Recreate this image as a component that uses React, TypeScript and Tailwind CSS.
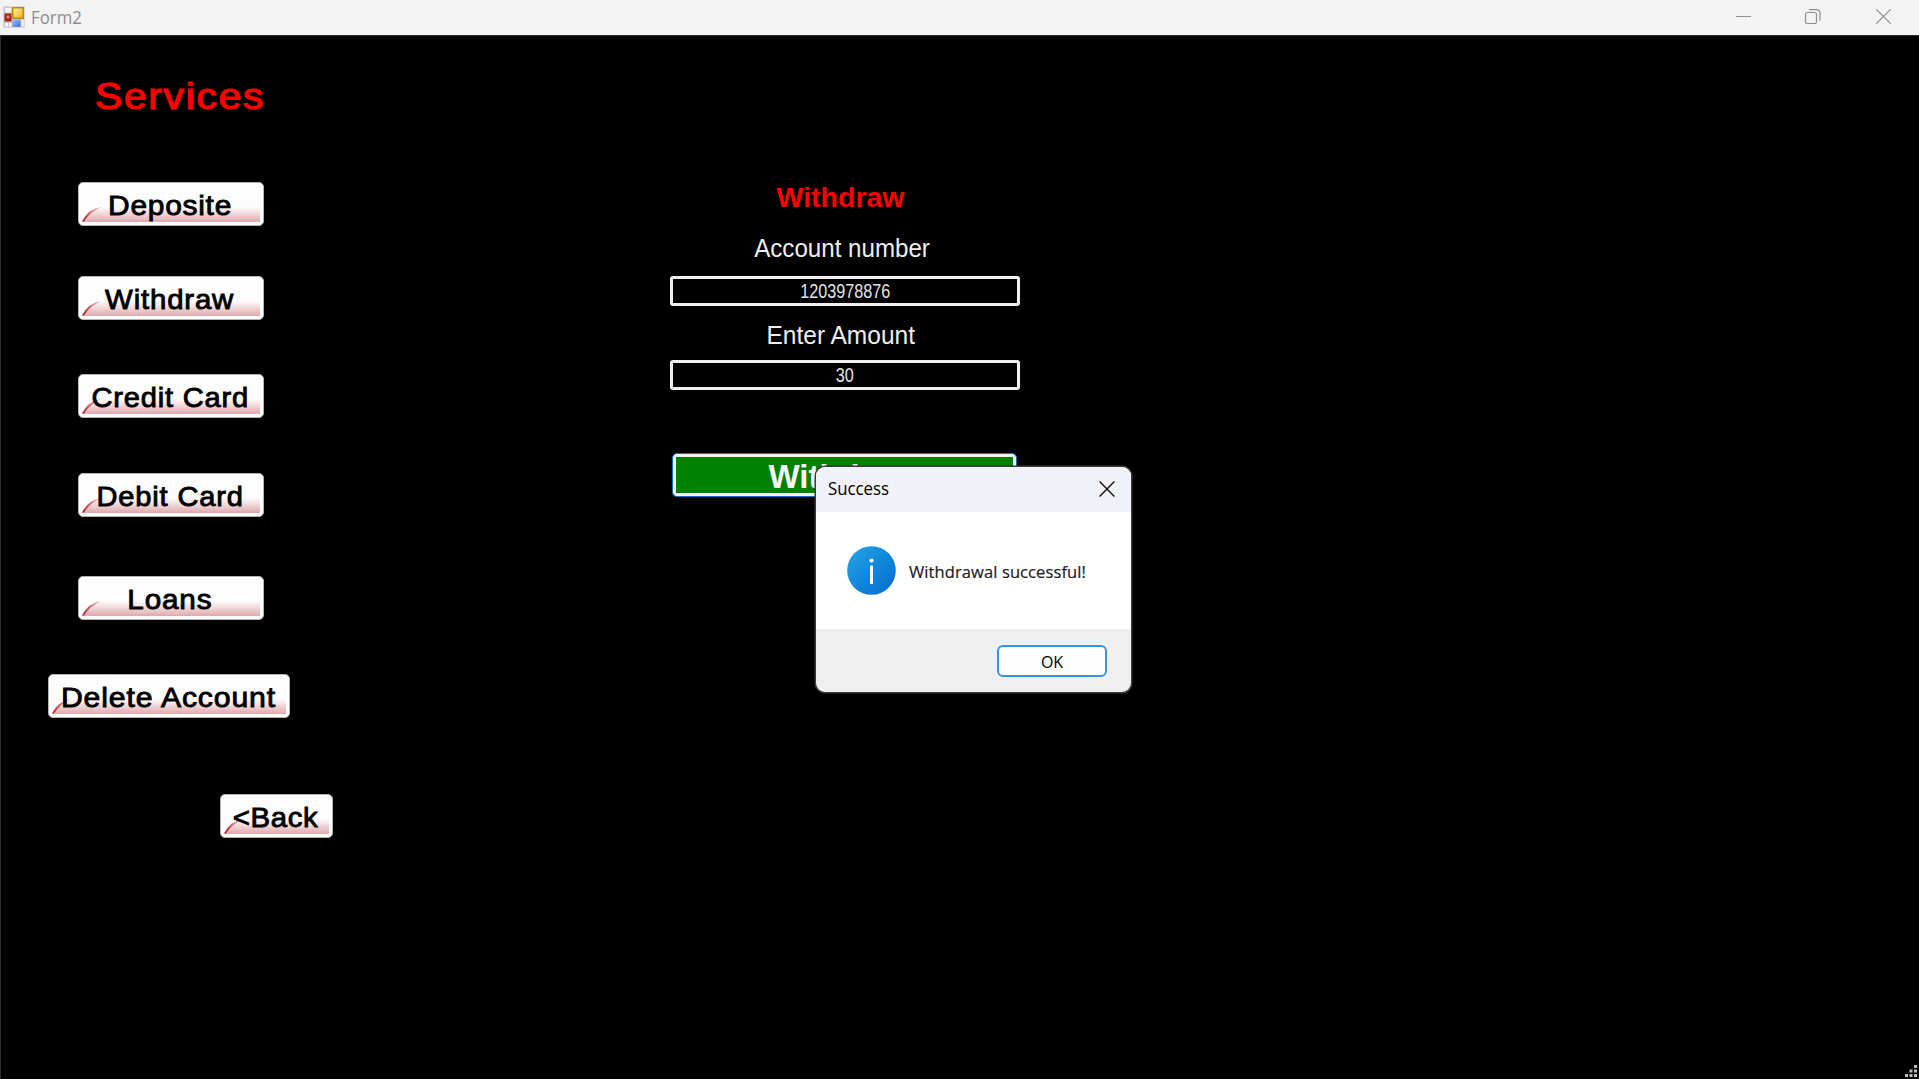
import React from "react";

type ServiceButtonProps = { label: string; box: string; text: string };

function ServiceButton({ label, box, text }: ServiceButtonProps) {
  return (
    <button
      className={`relative flex h-[44px] shrink-0 items-center justify-center rounded-[5px] border border-[#b4b4b4] bg-[#fdfdfd] ${box}`}
    >
      <span className="absolute bottom-[3px] left-[3px] right-[3px] h-[15px] bg-linear-to-b from-[#fdfdfd] to-[#dfa9ad] [clip-path:polygon(0_100%,7px_35%,18px_0,100%_0,100%_100%)]" />
      <svg className="absolute bottom-[3px] left-[3px]" width="22" height="16" viewBox="0 0 22 16">
        <defs>
          <linearGradient id="swoosh" x1="0" y1="1" x2="1" y2="0">
            <stop offset="0" stopColor="#b01c26" />
            <stop offset="1" stopColor="#e8c0c2" />
          </linearGradient>
        </defs>
        <path d="M0 15.5Q6 3 20 .8Q9 5 2 15.5Z" fill="url(#swoosh)" />
      </svg>
      <span className={`relative mr-[2px] mt-[2px] block whitespace-nowrap text-[28.5px] leading-[34px] text-black [-webkit-text-stroke:0.9px_black] ${text}`}>
        {label}
      </span>
    </button>
  );
}

function Field({ value, margin }: { value: string; margin: string }) {
  return (
    <div
      className={`flex h-[30px] w-[350px] items-center justify-center rounded-[3px] border-[3px] border-[#efefef] text-[19.5px] leading-none text-[#e4e4e4] ${margin}`}
    >
      <span className="mt-[1px] block scale-x-[0.83]">{value}</span>
    </div>
  );
}

function FormIcon() {
  return (
    <svg width="22" height="22" viewBox="0 0 22 22">
      <defs>
        <linearGradient id="gold" x1="0" y1="0" x2="1" y2="1">
          <stop offset="0" stopColor="#fff0a8" />
          <stop offset="1" stopColor="#eeb512" />
        </linearGradient>
        <linearGradient id="blue" x1="0" y1="0" x2="1" y2="1">
          <stop offset="0" stopColor="#9dbdf5" />
          <stop offset="1" stopColor="#3a6fd6" />
        </linearGradient>
      </defs>
      <rect x=".3" y=".3" width="21.4" height="21.4" fill="#c9c9c9" />
      <rect x="2" y="2" width="6" height="4.5" fill="#f4f4f4" />
      <rect x="1.5" y="7.5" width="7" height="8" fill="#a8201c" />
      <rect x="3.5" y="9.5" width="3" height="3" fill="#dd7f77" />
      <rect x="2" y="17" width="3" height="3.5" fill="#f6f6f6" />
      <rect x="6" y="17" width="2.5" height="3.5" fill="#f6f6f6" />
      <rect x="9" y="1" width="12" height="12" fill="#bd8b12" />
      <rect x="10.5" y="2.5" width="9" height="9" fill="url(#gold)" />
      <rect x="9.5" y="13.8" width="8" height="7" fill="url(#blue)" />
      <rect x="18.6" y="14" width="2" height="6.5" fill="#f6f6f6" />
    </svg>
  );
}

function TitleBar() {
  return (
    <header className="flex h-[35px] shrink-0 items-center bg-[#f3f3f3] pl-[3px]">
      <div className="mt-[-1px]">
        <FormIcon />
      </div>
      <span className="ml-[6px] origin-left scale-x-[0.96] font-['Open_Sans',sans-serif] text-[17.5px] leading-none text-[#8d8d8d]">
        Form2
      </span>
      <svg className="mt-[-2px] ml-auto mr-[28px]" width="155" height="15" viewBox="0 0 155 15" fill="none" stroke="#8f8f8f">
        <path d="M0 7.5H15" />
        <rect x="69.5" y="3.5" width="11" height="11" rx="1.8" strokeWidth="1.2" />
        <path d="M73 .6h7.2q3.8 0 3.8 3.8v7.4" strokeWidth="1.2" />
        <path d="M140.3.3l14.4 14.4M154.7.3L140.3 14.7" strokeWidth="1.2" />
      </svg>
    </header>
  );
}

function SuccessDialog() {
  return (
    <div className="absolute left-[816px] top-[467px] flex h-[225px] w-[315px] flex-col overflow-hidden rounded-[9px] bg-[#efefef] font-['Open_Sans',sans-serif] text-black shadow-[0_0_0_1.5px_#3a3a3a] [&>*]:shrink-0">
      <div className="flex h-[45px] items-center justify-between bg-[#f1f2f8] pl-[12px] pr-[16px]">
        <span className="mt-[-2px] origin-left scale-x-[0.96] text-[17.5px] leading-none">Success</span>
        <svg className="mt-[-2px]" width="16" height="16" viewBox="0 0 16 16" stroke="#111" strokeWidth="1.4">
          <path d="M.6.6l14.8 14.8M15.4.6L.6 15.4" />
        </svg>
      </div>
      <div className="flex h-[117px] items-center bg-white pl-[31px]">
        <svg width="49" height="49" viewBox="0 0 49 49">
          <defs>
            <linearGradient id="info" x1="0" y1="0" x2="1" y2="1">
              <stop offset=".1" stopColor="#1f9fe4" />
              <stop offset=".9" stopColor="#0670d2" />
            </linearGradient>
          </defs>
          <circle cx="24.5" cy="24.5" r="24.3" fill="url(#info)" />
          <circle cx="24.5" cy="14.5" r="2.1" fill="#fff" />
          <rect x="23" y="19.5" width="3" height="18.5" rx=".6" fill="#fff" />
        </svg>
        <span className="ml-[13px] mt-[3px] origin-left whitespace-nowrap text-[16.5px] leading-none tracking-[0.1px] text-[#1c1c1c] [-webkit-text-stroke:0.2px_#1c1c1c]">
          Withdrawal successful!
        </span>
      </div>
      <div className="flex h-[63px] items-center justify-end pr-6">
        <button className="flex h-8 w-[110px] items-center justify-center rounded-[6px] border-2 border-[#3a93dc] bg-[#fdfdfd] pt-[2px] text-[16px] leading-none">
          OK
        </button>
      </div>
    </div>
  );
}

function ResizeGrip() {
  return (
    <svg className="absolute bottom-0 right-0" width="16" height="16" viewBox="0 0 16 16" fill="#bcbcbc">
      <rect x="11" y="2" width="3" height="3" />
      <rect x="6.5" y="6.5" width="3" height="3" />
      <rect x="11" y="6.5" width="3" height="3" />
      <rect x="2" y="11" width="3" height="3" />
      <rect x="6.5" y="11" width="3" height="3" />
      <rect x="11" y="11" width="3" height="3" />
    </svg>
  );
}

export default function App() {
  return (
    <div className="relative flex h-[1079px] w-[1919px] flex-col overflow-hidden bg-black font-['Liberation_Sans',Arial,sans-serif]">
      <TitleBar />
      <main className="flex flex-1 border-l border-t border-[#2c2c2c]">
        <nav className="flex w-[400px] flex-col items-start">
          <h1 className="ml-[94px] mt-[39px] origin-left scale-x-[1.1] text-[37px] leading-[44px] tracking-[1.6px] text-[#ff0000] [-webkit-text-stroke:1.2px_#ff0000]">
            Services
          </h1>
          <ServiceButton label="Deposite" box="ml-[77px] mt-[63px] w-[186px]" text="scale-x-[1.05] tracking-[0.7px]" />
          <ServiceButton label="Withdraw" box="ml-[77px] mt-[50px] w-[186px]" text="scale-x-[1.03] tracking-[0.8px]" />
          <ServiceButton label="Credit Card" box="ml-[77px] mt-[54px] w-[186px]" text="scale-x-[1.02] tracking-[0.8px]" />
          <ServiceButton label="Debit Card" box="ml-[77px] mt-[55px] w-[186px]" text="scale-x-[1.02] tracking-[0.8px]" />
          <ServiceButton label="Loans" box="ml-[77px] mt-[59px] w-[186px]" text="scale-x-[1.04] tracking-[0.8px]" />
          <ServiceButton label="Delete Account" box="ml-[47px] mt-[54px] w-[242px]" text="scale-x-[1.06] tracking-[0.8px]" />
          <ServiceButton label="<Back" box="ml-[219px] mt-[76px] w-[113px]" text="scale-x-[1.03] tracking-[0.6px]" />
        </nav>
        <section className="ml-[269px] flex w-[350px] flex-col items-center">
          <h2 className="mr-[9px] mt-[144px] text-[28.5px] font-bold leading-[34px] text-[#ff0000]">Withdraw</h2>
          <label className="mr-[5px] mt-[20px] scale-x-[0.965] text-[25px] leading-[28px] text-[#eeeeee]">Account number</label>
          <Field value="1203978876" margin="mt-[14px]" />
          <label className="mr-[9px] mt-[15px] scale-x-[0.98] text-[25px] leading-[28px] text-[#eeeeee]">Enter Amount</label>
          <Field value="30" margin="mt-[11px]" />
          <button className="mr-[1px] mt-[63px] flex h-[44px] w-[345px] items-center justify-center rounded-[5px] border border-[#0f6fc4] bg-[#f2f2f2] p-[3px]">
            <span className="flex h-full w-full items-center justify-center bg-[#008000] pr-[4px] pt-[2px] text-[33px] font-bold leading-none text-[#f5f5f5]">
              Withdraw
            </span>
          </button>
        </section>
      </main>
      <SuccessDialog />
      <ResizeGrip />
    </div>
  );
}
